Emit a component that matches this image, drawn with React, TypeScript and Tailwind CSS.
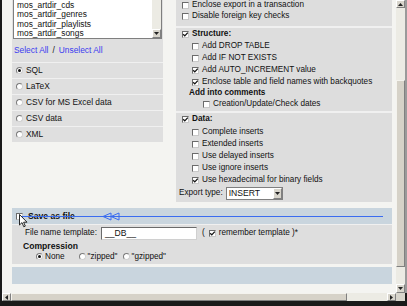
import React from 'react';

const font = { fontFamily: '"Liberation Sans", Arial, sans-serif' };

function Cb({ checked = false }: { checked?: boolean }) {
  return (
    <span className="relative inline-block w-[7px] h-[7px] shrink-0 bg-white border border-t-[#6b6b6b] border-l-[#6b6b6b] border-r-[#c8c8c8] border-b-[#c8c8c8]">
      {checked && (
        <svg viewBox="0 0 7 7" className="absolute -left-px -top-px w-[7px] h-[7px]">
          <path d="M1.2 3.2 L2.8 4.9 L5.8 1.6" fill="none" stroke="#111" strokeWidth="1.3" />
        </svg>
      )}
    </span>
  );
}

function Radio({ checked = false }: { checked?: boolean }) {
  return (
    <span className="relative inline-flex items-center justify-center w-[7px] h-[7px] shrink-0 rounded-full bg-white border border-t-[#7a7a7a] border-l-[#7a7a7a] border-r-[#d0d0d0] border-b-[#d0d0d0]">
      {checked && <span className="w-[3px] h-[3px] rounded-full bg-[#111]" />}
    </span>
  );
}

function Row({ checked, label, indent = 0, h = 'h-[12px]', bold = false }: { checked?: boolean; label: string; indent?: number; h?: string; bold?: boolean }) {
  return (
    <div className={`flex items-center gap-[3px] ${h}`} style={{ paddingLeft: indent }}>
      <Cb checked={checked} />
      <span className={bold ? 'font-bold' : ''}>{label}</span>
    </div>
  );
}

const formats = [
  { label: 'SQL', checked: true },
  { label: 'LaTeX' },
  { label: 'CSV for MS Excel data' },
  { label: 'CSV data' },
  { label: 'XML' },
];

export default function App() {
  return (
    <div className="w-[407px] h-[306px] bg-[#1a1a1a] overflow-hidden text-[8.2px] leading-none text-[#111] relative" style={font}>
      <div className="flex h-[293px] pl-[2px]">
        {/* page */}
        <div className="w-[394px] h-full bg-[#f4f4f1] pl-[10px] flex flex-col">
          <div className="flex gap-[13px] items-start">
            {/* left column */}
            <div className="w-[151px] flex flex-col gap-px bg-[#f0f0f0]">
              <div className="bg-[#dfdfdf] px-px pb-[2px]">
                <div className="flex h-[39px] bg-white border border-[#7f7f7f] border-t-0 overflow-hidden">
                  <div className="flex-1 pl-[3px] flex flex-col">
                    {['mos_artdir_cds', 'mos_artdir_genres', 'mos_artdir_playlists', 'mos_artdir_songs'].map(o => (
                      <div key={o} className="h-[9.5px] flex items-center text-[8.4px]">{o}</div>
                    ))}
                  </div>
                  <div className="w-[9px] bg-[#ecebe4] flex flex-col justify-end">
                    <div className="h-[9px] bg-[#d8d5cc] border border-t-white border-l-white border-r-[#808080] border-b-[#808080] flex items-center justify-center">
                      <svg viewBox="0 0 5 3" className="w-[5px] h-[3px]"><path d="M0 0 H5 L2.5 3 Z" fill="#222" /></svg>
                    </div>
                  </div>
                </div>
                <div className="h-[21px] flex items-center pl-[1px] pt-[1px] text-[8.4px]">
                  <span className="text-[#3b3bf0]">Select All</span>
                  <span className="mx-[4px]">/</span>
                  <span className="text-[#3b3bf0]">Unselect All</span>
                </div>
              </div>
              {formats.map(f => (
                <div key={f.label} className="h-[15px] bg-[#dfdfdf] flex items-center gap-[3px] pl-[4px] text-[8.4px]">
                  <Radio checked={f.checked} />
                  <span>{f.label}</span>
                </div>
              ))}
            </div>

            {/* right column */}
            <div className="w-[216px] flex flex-col gap-[2px] bg-[#f0f0f0]">
              <div className="bg-[#dddddd] pl-[6px] pt-0 pb-[4px]">
                <Row label="Enclose export in a transaction" h="h-[11px]" />
                <Row label="Disable foreign key checks" h="h-[11px]" />
              </div>
              <div className="bg-[#dddddd] pl-[6px] pb-[1px]">
                <Row checked bold label="Structure:" />
                <Row indent={10} label="Add DROP TABLE" />
                <Row indent={10} label="Add IF NOT EXISTS" />
                <Row indent={10} checked label="Add AUTO_INCREMENT value" />
                <Row indent={10} checked label="Enclose table and field names with backquotes" />
                <div className="h-[11px] flex items-center pl-[7px] font-bold">Add into comments</div>
                <Row indent={21} label="Creation/Update/Check dates" h="h-[11px]" />
              </div>
              <div className="bg-[#dddddd] pl-[6px] pb-[1px]">
                <Row checked bold label="Data:" h="h-[13px]" />
                <Row indent={10} label="Complete inserts" />
                <Row indent={10} label="Extended inserts" />
                <Row indent={10} label="Use delayed inserts" />
                <Row indent={10} label="Use ignore inserts" />
                <Row indent={10} checked label="Use hexadecimal for binary fields" />
                <div className="h-[15px] flex items-center -ml-[3px] gap-[3px]">
                  <span>Export type:</span>
                  <div className="w-[57px] h-[13px] bg-white border border-[#7f7f7f] flex items-center">
                    <span className="flex-1 pl-[2px] text-[8.6px]">INSERT</span>
                    <div className="w-[9px] h-[11px] bg-[#d8d5cc] border border-t-white border-l-white border-r-[#808080] border-b-[#808080] flex items-center justify-center">
                      <svg viewBox="0 0 5 3" className="w-[5px] h-[3px]"><path d="M0 0 H5 L2.5 3 Z" fill="#222" /></svg>
                    </div>
                  </div>
                </div>
              </div>
            </div>
          </div>

          {/* save as file */}
          <div className="w-[380px] mt-[6px] flex flex-col gap-px bg-[#f0f0f0]">
            <div className="h-[16px] bg-[#c9d5de] flex items-center gap-[5px] pl-[4px]">
              <Cb />
              <span className="font-bold text-[8.6px]">Save as file</span>
            </div>
            <div className="h-[39px] bg-[#dedede] flex flex-col">
              <div className="flex items-center h-[16px] pl-[13px] pt-[1px]">
                <span className="w-[76px]">File name template:</span>
                <div className="w-[96px] h-[13px] bg-white border border-t-[#6b6b6b] border-l-[#6b6b6b] border-r-[#d0d0d0] border-b-[#d0d0d0] flex items-center pl-[3px] text-[8.6px]">__DB__</div>
                <span className="ml-[5px]">(</span>
                <span className="ml-[4px] flex items-center gap-[3px]">
                  <Cb checked />
                  <span>remember template )*</span>
                </span>
              </div>
              <div className="h-[10px] flex items-end pl-[11px] font-bold text-[8.6px]">Compression</div>
              <div className="h-[12px] flex items-center pl-[24px]">
                <span className="flex items-center gap-[2px]"><Radio checked /><span>None</span></span>
                <span className="flex items-center gap-[2px] ml-[14px]"><Radio /><span>"zipped"</span></span>
                <span className="flex items-center gap-[2px] ml-[5px]"><Radio /><span>"gzipped"</span></span>
              </div>
            </div>
          </div>
          <div className="w-[380px] h-[17px] mt-[3px] bg-[#c9d5de]" />
        </div>

        {/* vertical scrollbar */}
        <div className="w-[9px] h-full bg-[#ecebe4] flex flex-col">
          <div className="h-[8px] bg-[#d8d5cc] border border-t-white border-l-white border-r-[#808080] border-b-[#808080] flex items-center justify-center">
            <svg viewBox="0 0 5 3" className="w-[5px] h-[3px]"><path d="M0 3 H5 L2.5 0 Z" fill="#222" /></svg>
          </div>
          <div className="h-[72px]" />
          <div className="h-[187px] bg-[#d6d2c8] border border-t-[#f4f3ee] border-l-[#f4f3ee] border-r-[#808080] border-b-[#808080]" />
          <div className="flex-1" />
          <div className="h-[9px] bg-[#d8d5cc] border border-t-white border-l-white border-r-[#808080] border-b-[#808080] flex items-center justify-center">
            <svg viewBox="0 0 5 3" className="w-[5px] h-[3px]"><path d="M0 0 H5 L2.5 3 Z" fill="#222" /></svg>
          </div>
        </div>
        <div className="w-[2px] h-full bg-[#9a9a9a]" />
      </div>

      {/* horizontal scrollbar */}
      <div className="flex h-[8px] pl-[2px]">
        <div className="w-[394px] flex bg-[#ecebe4]">
          <div className="w-[9px] bg-[#d8d5cc] border border-t-white border-l-white border-r-[#808080] border-b-[#808080] flex items-center justify-center">
            <svg viewBox="0 0 3 5" className="w-[3px] h-[5px]"><path d="M3 0 V5 L0 2.5 Z" fill="#222" /></svg>
          </div>
          <div className="w-[336px] bg-[#d6d2c8] border border-t-[#f4f3ee] border-l-[#f4f3ee] border-r-[#808080] border-b-[#808080]" />
          <div className="flex-1" />
          <div className="w-[9px] bg-[#d8d5cc] border border-t-white border-l-white border-r-[#808080] border-b-[#808080] flex items-center justify-center">
            <svg viewBox="0 0 3 5" className="w-[3px] h-[5px]"><path d="M0 0 V5 L3 2.5 Z" fill="#222" /></svg>
          </div>
        </div>
        <div className="w-[9px] bg-[#d8d5cc]" />
      </div>

      {/* annotation line with arrows */}
      <div className="absolute left-[20px] top-[216px] w-[363px] h-px bg-[#3a6cf0]" />
      <svg className="absolute left-[102px] top-[212px]" width="20" height="9" viewBox="0 0 20 9">
        <path d="M1 4.5 L9 1 L9 8 Z" fill="#c9d5de" stroke="#3a6cf0" strokeWidth="1" />
        <path d="M9 4.5 L17 1 L17 8 Z" fill="#c9d5de" stroke="#3a6cf0" strokeWidth="1" />
        <path d="M0 4.5 H20" stroke="#3a6cf0" strokeWidth="1" />
      </svg>

      {/* mouse cursor */}
      <svg className="absolute left-[19px] top-[214px]" width="9" height="14" viewBox="0 0 9 14">
        <path d="M0.5 0.5 L0.5 11 L3 8.6 L4.8 12.8 L6.3 12.1 L4.6 8.2 L8 8.2 Z" fill="#fff" stroke="#111" strokeWidth="0.9" strokeLinejoin="round" />
      </svg>
    </div>
  );
}
